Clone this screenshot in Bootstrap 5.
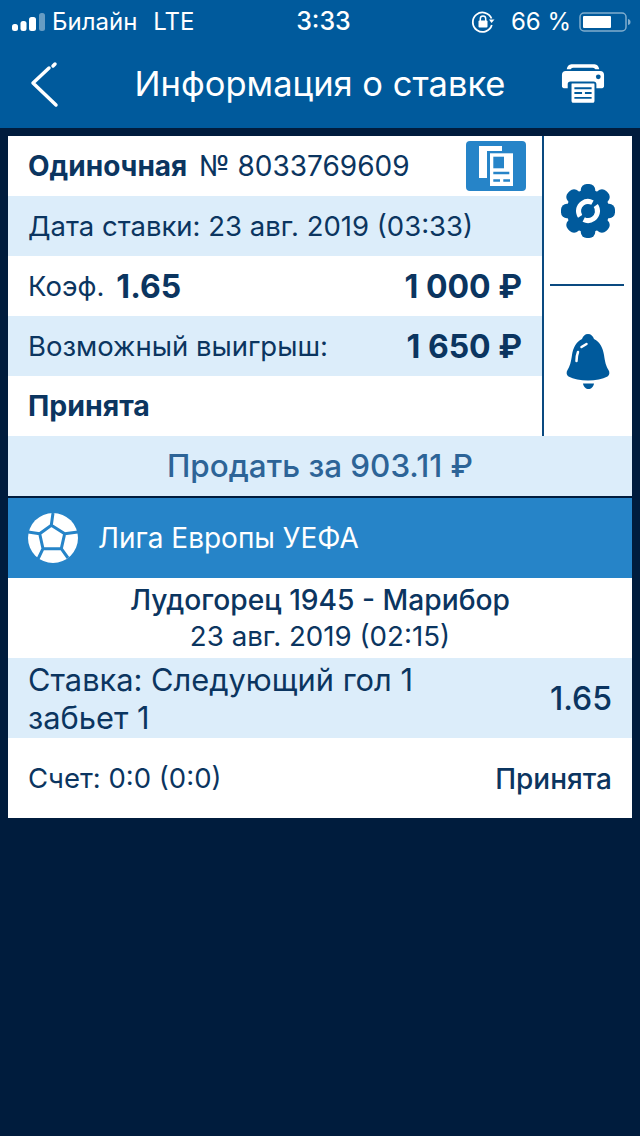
<!DOCTYPE html>
<html lang="ru">
<head>
    <meta charset="UTF-8">
    <meta name="viewport" content="width=device-width, initial-scale=1.0">
    <title>Информация о ставке</title>
    <link rel="stylesheet" href="https://cdn.jsdelivr.net/npm/bootstrap@5.3.0/dist/css/bootstrap.min.css">
    <style>
        body {
            background-color: #001c3d;
            font-family: Inter, "Liberation Sans", sans-serif;
            color: #0b3560;
            width: 640px;
            height: 1136px;
            overflow: hidden;
        }
        .top-head {
            height: 128px;
            background: #005a9c;
            color: #fff;
        }
        .status-line {
            height: 40px;
            padding: 3px 8px 0 12px;
            font-size: 24px;
        }
        .status-time { font-weight: 500; width: 90px; text-align: center; font-size: 25px; margin-left: 3px; }
        .status-side { width: 275px; }
        .title-line { height: 88px; padding: 0 35px 0 30px; }
        .title-line .printer-ico { margin-bottom: 2px; }
        .title-text { font-size: 34.5px; font-weight: 400; margin-left: 19px; }
        .sheet { margin: 8px 8px 0 8px; background: #fff; }
        .bet-left { width: 534px; }
        .bet-side { width: 90px; border-left: 2px solid #0a4a80; height: 300px; }
        .side-cell { height: 148px; }
        .gear-cell { padding-top: 2px; }
        .bell-cell { padding-top: 3px; }
        .side-rule { height: 2px; background: #0a4a80; margin: 0 0 0 6px; width: 74px; }
        .info-row { height: 60px; padding: 1px 20px 0 20px; font-size: 27.5px; }
        .tinted { background: #dcedfa; }
        .strong-txt { font-weight: 700; font-size: 28px; }
        .state-row { font-weight: 700; font-size: 28.5px; padding-top: 0; }
        .num-txt { font-size: 28px; }
        .big-num { font-size: 32px; font-weight: 700; color: #0b3560; }
        .copy-btn { width: 60px; height: 50px; background: #2684c8; border-radius: 4px; margin-right: -4px; margin-top: -1px; }
        .sell-row { height: 60px; padding-top: 1px; background: #dcedfa; color: #2d6497; font-size: 31.4px; font-weight: 500; }
        .gap-line { height: 2px; background: #001c3d; }
        .league-row { height: 80px; background: #2684c8; color: #fff; padding-left: 20px; font-size: 28px; }
        .league-row svg { margin-right: 20px; }
        .match-box { height: 80px; padding-top: 4px; font-size: 27.7px; line-height: 36px; }
        .match-name { font-weight: 500; font-size: 28.2px; }
        .stake-row { height: 80px; padding: 2px 20px 0 20px; background: #dcedfa; font-size: 30.8px; line-height: 38px; }
        .stake-row .big-odds { font-weight: 500; font-size: 32px; }
        .score-row { height: 80px; padding: 2px 20px 0 20px; font-size: 27.5px; }
        .score-state { font-weight: 500; font-size: 28px; }
    </style>
</head>
<body>
    <div class="top-head">
        <div class="status-line d-flex align-items-center justify-content-between">
            <div class="status-side d-flex align-items-center">
                <svg width="36" height="18" viewBox="0 0 36 18" class="me-1">
                    <rect x="0" y="11" width="6" height="7" rx="2.5" fill="#fff"/>
                    <rect x="8.500" y="8" width="6" height="10" rx="2.5" fill="#fff"/>
                    <rect x="17" y="4" width="7" height="14" rx="2.5" fill="#fff"/>
                    <rect x="27" y="0" width="6" height="18" rx="2.5" fill="#fff" fill-opacity=".4"/>
                </svg>
                <span>Билайн</span>
                <span class="ms-3">LTE</span>
            </div>
            <div class="status-time">3:33</div>
            <div class="status-side d-flex align-items-center justify-content-end">
                <svg width="24" height="24" viewBox="0 0 24 24" class="me-3">
                    <path d="M20.500 8.500A9.700 9.700 0 1 0 20.800 15" fill="none" stroke="#fff" stroke-width="1.800"/>
                    <path d="M18 9.500h5.500L20.500 13z" fill="#fff"/>
                    <rect x="7.500" y="10.500" width="9" height="7" rx="1" fill="#fff"/>
                    <path d="M9.300 11V8.800a2.700 2.700 0 0 1 5.400 0V11" fill="none" stroke="#fff" stroke-width="1.500"/>
                </svg>
                <span>66 %</span>
                <svg width="53" height="20" viewBox="0 0 53 20" class="ms-2">
                    <rect x="1" y="1" width="46" height="18" rx="4" fill="none" stroke="#fff" stroke-opacity=".5" stroke-width="1.500"/>
                    <rect x="4" y="4" width="28" height="12" rx="1" fill="#fff"/>
                    <path d="M49 7c2 .5 2.500 1.500 2.500 3s-.5 2.500-2.500 3z" fill="#fff" fill-opacity=".5"/>
                </svg>
            </div>
        </div>
        <div class="title-line d-flex align-items-center justify-content-between">
            <svg width="30" height="50" viewBox="0 0 30 50">
                <path d="M25 5l-2 2M26 46L3 24 19 9" fill="none" stroke="#fff" stroke-width="3.500" stroke-linecap="round" stroke-linejoin="round"/>
            </svg>
            <div class="title-text">Информация о ставке</div>
            <svg class="printer-ico" width="44" height="41" viewBox="0 0 46 42">
                <path d="M6 6C7 2 9 1 12 1h22c3 0 5 1 6 5h-4c-1-1-2-1.500-3-1.500H13c-1 0-2 .5-3 1.500z" fill="#fff"/>
                <path d="M5 8h36c2.500 0 4 1.500 4 4v12c0 1-1 2-2 2h-6v-4c0-2-1-3-3-3H10c-2 0-3 1-3 3v4H3c-1 0-2-1-2-2V12c0-2.500 1.500-4 4-4z" fill="#fff"/>
                <circle cx="39" cy="14" r="2.500" fill="#005a9c"/>
                <path d="M12 21h22c1 0 1 .5 1 1v17c0 2-1 2-2 2H13c-1 0-2 0-2-2V22c0-.5 0-1 1-1z" fill="#fff"/>
                <path d="M14 26h18M14 31h8M25 31h7M14 36h18" stroke="#005a9c" stroke-width="2"/>
            </svg>
        </div>
    </div>

    <div class="sheet">
        <div class="d-flex">
            <div class="bet-left">
                <div class="info-row d-flex align-items-center justify-content-between">
                    <div><span class="strong-txt">Одиночная</span> <span class="num-txt ms-1">№ 8033769609</span></div>
                    <div class="copy-btn d-flex align-items-center justify-content-center">
                        <svg width="34" height="40" viewBox="0 0 34 40">
                            <path d="M0 0h23v5H8v27H0z" fill="#fff"/>
                            <path d="M11 7.300h23V40H11z" fill="#fff"/>
                            <path d="M14.300 10.700H25v11.600H14.300z" fill="#2684c8"/>
                            <path d="M14.300 25.700h16v2.600h-16zM14.300 33.300H21v2.400h-6.700zM24.300 33.300H31v2.400h-6.700z" fill="#2684c8"/>
                        </svg>
                    </div>
                </div>
                <div class="info-row tinted d-flex align-items-center">Дата ставки: 23 авг. 2019 (03:33)</div>
                <div class="info-row d-flex align-items-center justify-content-between">
                    <div class="d-flex align-items-center">Коэф.<span class="big-num ms-2 ps-1">1.65</span></div>
                    <div class="big-num">1 000 ₽</div>
                </div>
                <div class="info-row tinted d-flex align-items-center justify-content-between">
                    <div>Возможный выигрыш:</div>
                    <div class="big-num">1 650 ₽</div>
                </div>
                <div class="info-row state-row d-flex align-items-center">Принята</div>
            </div>
            <div class="bet-side">
                <div class="side-cell gear-cell d-flex align-items-center justify-content-center">
                    <svg width="54" height="54" viewBox="0 0 54 54">
                        <g fill="#005a9c">
                            <circle cx="27" cy="27" r="21.500"/>
                            <rect x="19.750" y="0" width="14.500" height="54" rx="6"/>
                            <rect x="19.750" y="0" width="14.500" height="54" rx="6" transform="rotate(45 27 27)"/>
                            <rect x="19.750" y="0" width="14.500" height="54" rx="6" transform="rotate(90 27 27)"/>
                            <rect x="19.750" y="0" width="14.500" height="54" rx="6" transform="rotate(135 27 27)"/>
                        </g>
                        <circle cx="27" cy="27" r="9.500" fill="none" stroke="#fff" stroke-width="5" stroke-dasharray="25 4.850" transform="rotate(-35 27 27)"/>
                    </svg>
                </div>
                <div class="side-rule"></div>
                <div class="side-cell bell-cell d-flex align-items-center justify-content-center">
                    <svg width="44" height="56" viewBox="0 0 44 56">
                        <path d="M22 0c3 0 5 2 6 5 6 3 9 9 10 16 1 7 2 11 4.500 15 1.500 2.500 1 5-1 6.500-5 2.500-12 4-19.500 4s-14.500-1.500-19.500-4c-2-1.500-2.500-4-1-6.500 2.500-4 3.500-8 4.500-15 1-7 4-13 10-16 1-3 3-5 6-5z" fill="#005a9c"/>
                        <path d="M17 49.500h11c-.5 3.500-3 5.500-5.500 5.500s-5-2-5.500-5.500z" fill="#005a9c"/>
                        <path d="M15.500 13l5-3M10.500 27c0-4 .5-6.500 1.500-9" fill="none" stroke="#fff" stroke-width="2.500" stroke-linecap="round"/>
                    </svg>
                </div>
            </div>
        </div>
        <div class="sell-row d-flex align-items-center justify-content-center">Продать за 903.11 ₽</div>
        <div class="gap-line"></div>
        <div class="league-row d-flex align-items-center">
            <svg width="50" height="50" viewBox="0 0 50 50">
                <circle cx="25" cy="25" r="25" fill="#fff"/>
                <path d="M23.300 12.300l13.400 8.400-3.400 15H15l-3.300-15zM25 0l-1.700 12.300M36.700 20.700L50 19M33.300 35.700L40 45M15 35.700L10 46M11.700 20.700L0 19" fill="none" stroke="#2684c8" stroke-width="3"/>
            </svg>
            <span>Лига Европы УЕФА</span>
        </div>
        <div class="match-box text-center">
            <div class="match-name">Лудогорец 1945 - Марибор</div>
            <div>23 авг. 2019 (02:15)</div>
        </div>
        <div class="stake-row d-flex align-items-center justify-content-between">
            <div>Ставка: Следующий гол 1<br>забьет 1</div>
            <div class="big-odds">1.65</div>
        </div>
        <div class="score-row d-flex align-items-center justify-content-between">
            <div>Счет: 0:0 (0:0)</div>
            <div class="score-state">Принята</div>
        </div>
    </div>
    <script src="https://cdn.jsdelivr.net/npm/bootstrap@5.3.0/dist/js/bootstrap.bundle.min.js"></script>
</body>
</html>
